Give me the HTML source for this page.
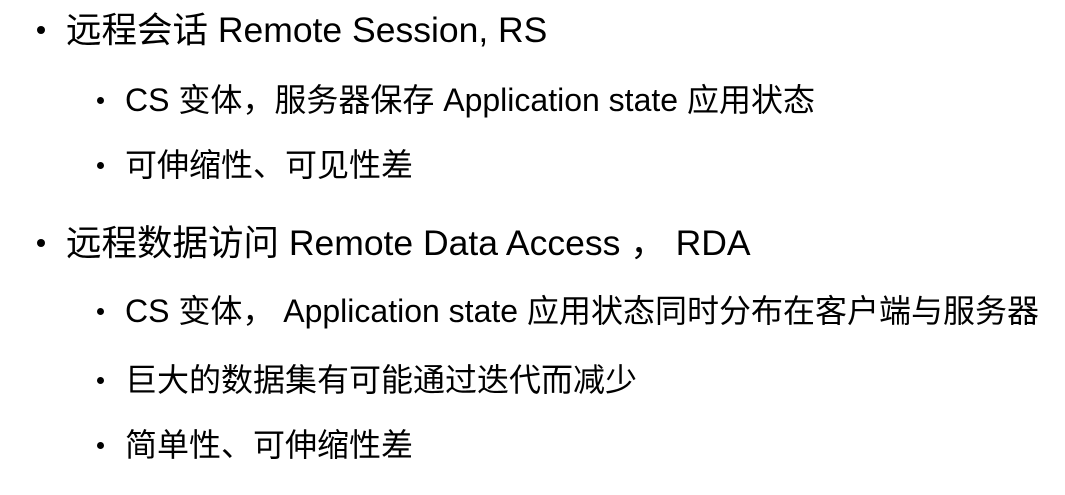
<!DOCTYPE html>
<html><head><meta charset="utf-8"><style>
html,body{margin:0;padding:0;background:#fff;width:1065px;height:495px;overflow:hidden}
div{position:absolute;white-space:nowrap;color:#000;font-family:"Liberation Sans","Noto Sans CJK SC",sans-serif;}
.l1{font-size:35.5px;line-height:40px;left:66px}
.l2{font-size:32px;line-height:36px;left:125px}
.b{position:absolute;border-radius:50%;background:#000}
</style></head><body>
<span class="b" style="left:37px;top:26px;width:8px;height:8px"></span>
<div class="l1" style="top:10px">远程会话 Remote Session, RS</div>
<span class="b" style="left:97px;top:97px;width:7px;height:7px"></span>
<div class="l2" style="top:82px">CS 变体，服务器保存 Application state 应用状态</div>
<span class="b" style="left:97px;top:162px;width:7px;height:7px"></span>
<div class="l2" style="top:147px">可伸缩性、可见性差</div>
<span class="b" style="left:37px;top:239px;width:8px;height:8px"></span>
<div class="l1" style="top:223px">远程数据访问 Remote Data Access ， RDA</div>
<span class="b" style="left:97px;top:308px;width:7px;height:7px"></span>
<div class="l2" style="top:293px">CS 变体， Application state 应用状态同时分布在客户端与服务器</div>
<span class="b" style="left:97px;top:377px;width:7px;height:7px"></span>
<div class="l2" style="top:362px">巨大的数据集有可能通过迭代而减少</div>
<span class="b" style="left:97px;top:442px;width:7px;height:7px"></span>
<div class="l2" style="top:427px">简单性、可伸缩性差</div>
</body></html>
